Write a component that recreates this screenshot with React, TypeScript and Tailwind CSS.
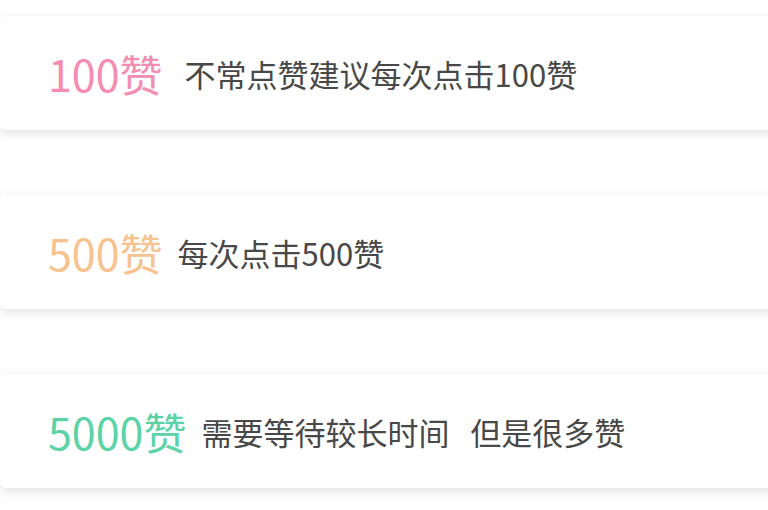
const options = [
  { amount: '100赞', tip: ' 不常点赞建议每次点击100赞', color: 'text-[#f38db2]' },
  { amount: '500赞', tip: '每次点击500赞', color: 'text-[#f8c28f]' },
  { amount: '5000赞', tip: '需要等待较长时间   但是很多赞', color: 'text-[#5cd3a6]' },
];

export default function App() {
  return (
    <div
      className="w-[768px] h-[510px] overflow-hidden bg-white"
      style={{ fontFamily: '"Noto Sans CJK SC", "Noto Sans", sans-serif' }}
    >
      <div className="flex flex-col gap-[65px] pt-[16px]">
        {options.map((opt) => (
          <div
            key={opt.amount}
            className="w-[800px] h-[114px] flex items-center pl-[48px] bg-white rounded-[6px] shadow-[0_3px_12px_rgba(0,0,0,0.12)]"
          >
            <span className={`text-[43px] leading-none ${opt.color}`}>{opt.amount}</span>
            <span className="ml-[15px] text-[31px] leading-none text-[#484848] whitespace-pre">
              {opt.tip}
            </span>
          </div>
        ))}
      </div>
    </div>
  );
}
